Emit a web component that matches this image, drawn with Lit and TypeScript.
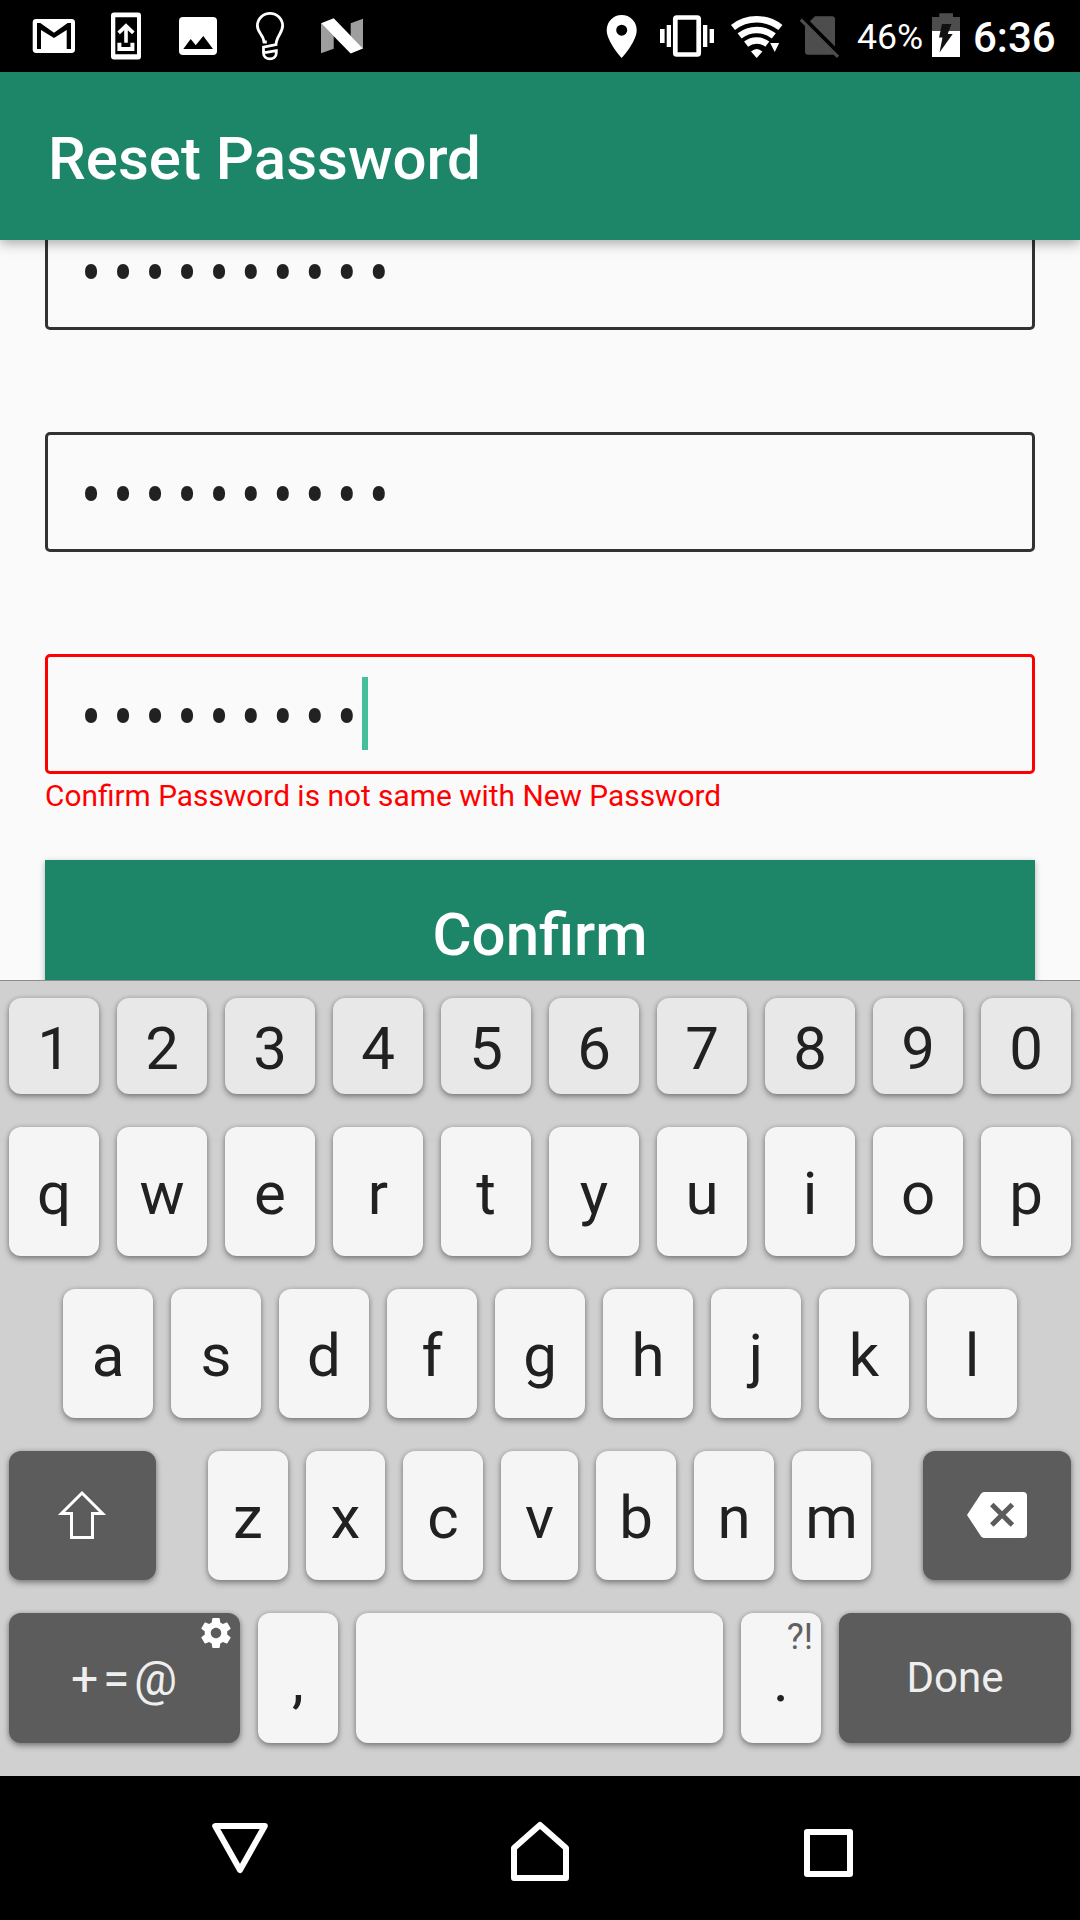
import { LitElement, html, css, svg, nothing } from "lit";
import { customElement, property } from "lit/decorators.js";
import { classMap } from "lit/directives/class-map.js";

@customElement("status-bar")
class StatusBar extends LitElement {
  static styles = css`
    :host { display: flex; height: 72px; background: #000; color: #fff; }
    svg { display: block; flex: none; }
    .notifications { display: flex; width: 572px; padding-left: 18px; box-sizing: border-box; }
    .system { display: flex; width: 490px; margin-left: 18px; }
    .percent { width: 68px; margin-left: 5px; font-size: 35.7px; line-height: 75.4px; }
    .time { margin-left: 6px; font-size: 42px; font-weight: 500; line-height: 75.2px; }
  `;
  private arc(r: number) {
    const dx = r * Math.sin(0.665), dy = r * Math.cos(0.665);
    return svg`<path d="M${756.7 - dx} ${57.7 - dy}A${r} ${r} 0 0 1 ${756.7 + dx} ${57.7 - dy}" fill="none" stroke="#fff" stroke-width="6.5"/>`;
  }
  render() {
    return html`
      <div class="notifications">
        <svg width="72" height="72" viewBox="18 0 72 72">
          <rect x="32.7" y="19" width="42.3" height="34" rx="3.4" fill="#fff"/>
          <path d="M37 23h3.3L54 32.7 67.7 23H71v26h-4.3V30L54 38 41 30v19h-4z" fill="#000"/>
        </svg>
        <svg width="72" height="72" viewBox="90 0 72 72">
          <path d="M114 12.5h24a3 3 0 0 1 3 3v41a3 3 0 0 1-3 3h-24a3 3 0 0 1-3-3v-41a3 3 0 0 1 3-3zM115.3 17.3v37H137v-37z" fill="#fff" fill-rule="evenodd"/>
          <path d="M126 23.3l8.6 8.3-2.5 2.6-4.3-4v12.5h-3.6V30.2l-4.3 4-2.5-2.6zM117.4 42.7h4V47h9v-4.3h4V51h-17z" fill="#fff"/>
        </svg>
        <svg width="72" height="72" viewBox="162 0 72 72">
          <rect x="179" y="17" width="38" height="38" rx="4" fill="#fff"/>
          <path d="M183.3 49l7.4-10 5 6.3 7.6-9.3 9.7 13z" fill="#000"/>
        </svg>
        <svg width="72" height="72" viewBox="234 0 72 72">
          <g fill="none" stroke="#fff" stroke-width="2.8">
            <path d="M264 42.5C264 35 257.4 33 257.4 25.7A12.6 12.3 0 0 1 282.6 25.7C282.6 33 276.3 36 276 44.7L263.5 47.2V53C263.5 60.800 276.300 60.800 276.300 53V50.600L265 52.600M262.800 42h4"/>
          </g>
        </svg>
        <svg width="72" height="72" viewBox="306 0 72 72">
          <path d="M321 23.3L333.7 36v12.7L321 53.3zM350.7 23.3L363 18.7v30L350.7 36z" fill="#9e9e9e"/>
          <path d="M321 23.3l12.7-5L363 48.6l-12.3 4.8z" fill="#fff"/>
        </svg>
      </div>
      <div class="system">
        <svg width="64" height="72" viewBox="590 0 64 72">
          <path d="M621.7 15a15 15 0 0 0-15 15.2C606.7 41.5 621.7 58 621.7 58S636.7 41.5 636.7 30.2A15 15 0 0 0 621.7 15zm0 20.7a5.5 5.5 0 1 1 0-11 5.5 5.5 0 0 1 0 11z" fill="#fff"/>
        </svg>
        <svg width="66" height="72" viewBox="654 0 66 72">
          <rect x="675.3" y="17.5" width="23.4" height="37" rx="1.5" fill="none" stroke="#fff" stroke-width="4.7"/>
          <path d="M666.7 25h4.3v22h-4.3zM660 29h4.6v14H660zM703 25h4.3v22H703zM709.6 29h4.4v14h-4.4z" fill="#fff"/>
        </svg>
        <svg width="70" height="72" viewBox="720 0 70 72">
          ${this.arc(38.4)}${this.arc(27.7)}${this.arc(17.2)}
          <path d="M756.7 57.9L751 51.5Q756.7 46.5 762.4 51.5zM770.2 43h9l-4.5 9z" fill="#fff"/>
        </svg>
        <svg width="62" height="72" viewBox="790 0 62 72">
          <path d="M815 16.3h17a3 3 0 0 1 3 3V51.7a3 3 0 0 1-3 3h-24a3 3 0 0 1-3-3V26z" fill="#4d4d4d"/>
          <path d="M802 16.5l38 38" stroke="#000" stroke-width="4.5"/>
          <path d="M800.8 19.6L838 56.8" stroke="#4d4d4d" stroke-width="3.2"/>
        </svg>
        <div class="percent">46%</div>
        <svg width="42" height="72" viewBox="925 0 42 72">
          <path d="M932 17h7.3v-3.7H953V17h7v14h-28z" fill="#4d4d4d"/>
          <path d="M932 31h28v26h-28z" fill="#fff"/>
          <path d="M942 24h9.5l-3.8 10h5L939.5 52.5l3-15H939z" fill="#111"/>
        </svg>
        <div class="time">6:36</div>
      </div>`;
  }
}

@customElement("password-field")
class PasswordField extends LitElement {
  @property({ type: Number }) length = 0;
  @property({ type: Boolean }) invalid = false;
  @property({ type: Boolean }) focused = false;
  static styles = css`
    :host { display: block; }
    .box { display: flex; align-items: center; box-sizing: border-box; height: 120px; padding-left: 33px; border: 3px solid #323232; border-radius: 5px; }
    .invalid { border-color: #f00; }
    .dots { width: 281px; font-size: 60px; line-height: 50px; letter-spacing: 11.73px; color: #212121; white-space: nowrap; transform: translateY(3px) scaleY(1.18); }
    .caret { width: 6px; height: 73px; margin-bottom: 1px; background: #45be9b; }
  `;
  render() {
    return html`<div class=${classMap({ box: true, invalid: this.invalid })}>
      <span class="dots">${"•".repeat(this.length)}</span>
      ${this.focused ? html`<span class="caret"></span>` : nothing}
    </div>`;
  }
}

const gear = html`<svg width="36" height="36" viewBox="0 0 24 24"><path fill="#fff" d="M19.43 12.98c.04-.32.07-.64.07-.98s-.03-.66-.07-.98l2.11-1.65c.19-.15.24-.42.12-.64l-2-3.46c-.12-.22-.39-.3-.61-.22l-2.49 1c-.52-.4-1.08-.73-1.69-.98l-.38-2.65A.488.488 0 0 0 14 2h-4c-.25 0-.46.18-.49.42l-.38 2.65c-.61.25-1.17.59-1.69.98l-2.49-1c-.23-.09-.49 0-.61.22l-2 3.46c-.13.22-.07.49.12.64l2.11 1.65c-.04.32-.07.65-.07.98s.03.66.07.98l-2.11 1.65c-.19.15-.24.42-.12.64l2 3.46c.12.22.39.3.61.22l2.49-1c.52.4 1.08.73 1.69.98l.38 2.65c.03.24.24.42.49.42h4c.25 0 .46-.18.49-.42l.38-2.65c.61-.25 1.17-.59 1.69-.98l2.49 1c.23.09.49 0 .61-.22l2-3.46c.12-.22.07-.49-.12-.64l-2.11-1.65zM12 15.5c-1.93 0-3.5-1.57-3.5-3.5s1.57-3.5 3.5-3.5 3.5 1.57 3.5 3.5-1.57 3.5-3.5 3.5z"/></svg>`;

const shiftIcon = html`<svg width="147" height="129" viewBox="9 1451 147 129"><path d="M82 1493l20.5 20.5h-10v24h-21v-24h-10z" fill="none" stroke="#fff" stroke-width="3"/></svg>`;

const backspaceIcon = html`<svg width="148" height="129" viewBox="923 1451 148 129"><path d="M967 1515l14-21.3q1.2-1.7 3-1.7h39a4 4 0 0 1 4 4v38a4 4 0 0 1-4 4h-39q-1.8 0-3-1.7z" fill="#fff"/><path d="M991.8 1504.5l20.6 20.6M1012.4 1504.5l-20.6 20.6" stroke="#5c5c5c" stroke-width="5"/></svg>`;

@customElement("soft-keyboard")
class SoftKeyboard extends LitElement {
  static styles = css`
    :host { display: flex; flex-direction: column; gap: 33px; box-sizing: border-box; height: 796px; padding: 17px 9px 0; border-top: 1px solid #8c8c8c; background: #d0d0d0; }
    svg { display: block; }
    .row { display: grid; grid-auto-flow: column; grid-template-rows: 100%; column-gap: 18px; height: 129px; justify-content: start; }
    .digits { height: 96px; grid-template-columns: repeat(10, 90px); }
    .top { grid-template-columns: repeat(10, 90px); }
    .home { grid-template-columns: repeat(9, 90px); padding-left: 54px; }
    .lower { display: flex; gap: 0; }
    .letters { display: grid; grid-template-rows: 100%; grid-template-columns: 80px 79px 80px 77px 80px 80px 79px; column-gap: 18px; margin: 0 52px; }
    .bottom { height: 130px; grid-template-columns: 231px 80px 367px 80px 232px; }
    .key { position: relative; box-sizing: border-box; height: 100%; border-radius: 12px; background: #f5f5f5; color: #212121; font-size: 60px; line-height: 133px; text-align: center; box-shadow: 0 3px 6px rgba(0, 0, 0, .36), 0 0 4px rgba(0, 0, 0, .16); }
    .digits .key { background: #e8e8e8; line-height: 101px; }
    .bottom .key { line-height: 135px; }
    .key.dark { background: #5c5c5c; color: #eee; }
    .key.shift { width: 147px; }
    .key.erase { width: 148px; }
    .bottom .key.symbols { padding-left: 4px; font-size: 48px; letter-spacing: 4.7px; line-height: 131px; }
    .bottom .key.done { font-size: 42px; line-height: 129px; }
    .gear { position: absolute; top: 2px; right: 6px; }
    .hint { position: absolute; top: 0; right: 8px; font-size: 36px; line-height: 48px; color: #606060; }
  `;
  private keys(chars: string) {
    return [...chars].map((c) => html`<div class="key">${c}</div>`);
  }
  render() {
    return html`
      <div class="row digits">${this.keys("1234567890")}</div>
      <div class="row top">${this.keys("qwertyuiop")}</div>
      <div class="row home">${this.keys("asdfghjkl")}</div>
      <div class="row lower">
        <div class="key dark shift">${shiftIcon}</div>
        <div class="letters">${this.keys("zxcvbnm")}</div>
        <div class="key dark erase">${backspaceIcon}</div>
      </div>
      <div class="row bottom">
        <div class="key dark symbols">+=@<span class="gear">${gear}</span></div>
        <div class="key">,</div>
        <div class="key"></div>
        <div class="key">.<span class="hint">?!</span></div>
        <div class="key dark done">Done</div>
      </div>`;
  }
}

@customElement("nav-bar")
class NavBar extends LitElement {
  static styles = css`
    :host { display: flex; justify-content: center; height: 144px; background: #000; }
    svg { display: block; width: 288px; height: 144px; }
    g { fill: none; stroke: #fff; stroke-width: 6; stroke-linejoin: round; }
  `;
  render() {
    return html`
      <svg viewBox="108 1776 288 144"><g><path d="M215.2 1826h49.6L240 1870z"/></g></svg>
      <svg viewBox="396 1776 288 144"><g><path d="M514 1848L540 1825 566 1848V1878H514z"/></g></svg>
      <svg viewBox="684 1776 288 144"><g><path d="M807 1832h43v42h-43z"/></g></svg>`;
  }
}

@customElement("app-root")
class AppRoot extends LitElement {
  static styles = css`
    :host { display: flex; flex-direction: column; width: 1080px; height: 1920px; overflow: hidden; background: #fafafa; font-family: Roboto, "Liberation Sans", sans-serif; }
    .appbar { position: relative; z-index: 1; height: 168px; box-sizing: border-box; padding-left: 48px; background: #1e8668; color: #fff; font-size: 60px; font-weight: 500; line-height: 173px; box-shadow: 0 3px 12px rgba(0, 0, 0, .34); }
    .viewport { display: flex; flex-direction: column; justify-content: flex-end; height: 740px; overflow: hidden; }
    .form { display: flex; flex-direction: column; gap: 102px; padding: 0 45px; margin-bottom: -30px; }
    .confirm-group { display: flex; flex-direction: column; }
    .error { height: 86px; font-size: 29.85px; line-height: 43.5px; color: #f00; }
    .confirm { height: 150px; background: #1e8668; color: #fff; font-size: 60px; font-weight: 500; line-height: 149px; text-align: center; box-shadow: 0 2px 6px rgba(0, 0, 0, .3); }
  `;
  render() {
    return html`
      <status-bar></status-bar>
      <div class="appbar">Reset Password</div>
      <div class="viewport">
        <div class="form">
          <password-field length="10"></password-field>
          <password-field length="10"></password-field>
          <div class="confirm-group">
            <password-field length="9" invalid focused></password-field>
            <div class="error">Confirm Password is not same with New Password</div>
            <div class="confirm">Confirm</div>
          </div>
        </div>
      </div>
      <soft-keyboard></soft-keyboard>
      <nav-bar></nav-bar>`;
  }
}
